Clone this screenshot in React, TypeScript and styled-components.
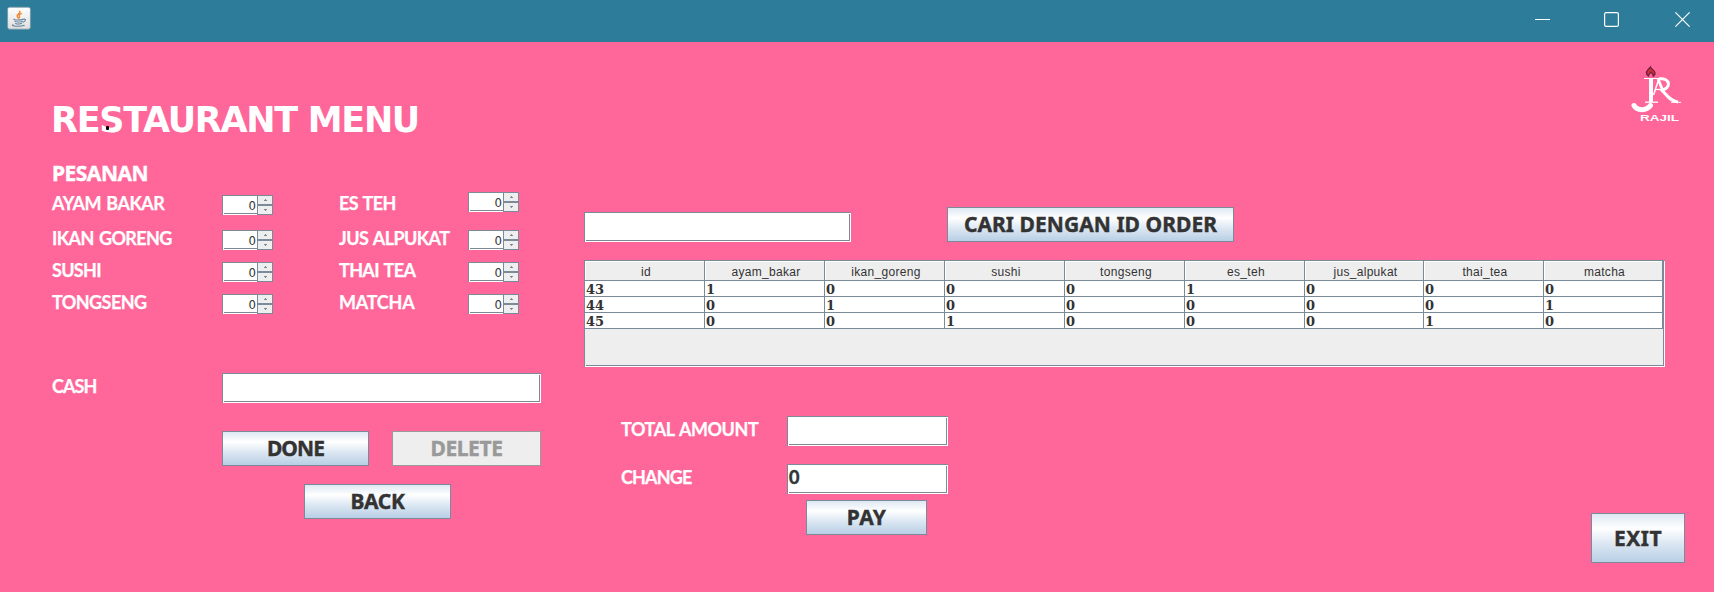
import React from "react";
import styled, { createGlobalStyle } from "styled-components";

const GRAY = "#7a8a99";

const Global = createGlobalStyle`
  * { box-sizing: border-box; }
  body { margin: 0; background: #ff6699; }
`;

const Window = styled.div`
  width: 1714px;
  height: 592px;
  display: flex;
  flex-direction: column;
  background: #ff6699;
  overflow: hidden;
`;

const TitleBar = styled.header`
  height: 42px;
  flex: none;
  display: flex;
  justify-content: space-between;
  background: #2d7d9a;
`;

const AppIcon = styled.svg`
  width: 24px;
  height: 24px;
  margin: 6px 0 0 7px;
`;

const WindowButtons = styled.div`
  display: flex;
  gap: 54px;
  padding: 12px 24px 0 0;
`;

const WindowGlyph = styled.svg`
  width: 15px;
  height: 15px;
  fill: none;
  stroke: #fff;
  &:last-child { margin-left: 2px; }
`;

const Client = styled.main`
  flex: 1;
  display: flex;
`;

const OrderPanel = styled.section`
  width: 584px;
  flex: none;
  padding: 42px 0 0 52px;
`;

const Title = styled.h1`
  position: relative;
  margin: 0;
  height: 72px;
  font: 700 35px/73px "DejaVu Sans", sans-serif;
  letter-spacing: -1.3px;
  text-indent: -1px;
  color: #fff;
  white-space: nowrap;
`;

const Dot = styled.i`
  position: absolute;
  left: 54px;
  top: 42px;
  width: 3px;
  height: 4px;
  border-radius: 1px;
  background: #000;
`;

const Subtitle = styled.h2`
  margin: 0;
  height: 39px;
  font: 700 21px/34px "Noto Sans", sans-serif;
  letter-spacing: -0.5px;
  -webkit-text-stroke: 0.4px currentColor;
  color: #fff;
`;

const OrderGrid = styled.div`
  display: grid;
  grid-template-columns: 170px 117px 129px 51px;
  grid-template-rows: 35px 32px 32px 32px;
`;

const Label = styled.label<{ $spacing: number }>`
  font: 700 18px/17px Lato, sans-serif;
  letter-spacing: ${(p) => p.$spacing}px;
  word-spacing: 1.5px;
  -webkit-text-stroke: 0.25px currentColor;
  color: #fff;
  white-space: nowrap;
`;

const SpinnerBox = styled.div<{ $raise?: boolean }>`
  display: flex;
  width: 51px;
  height: 20px;
  margin-top: ${(p) => (p.$raise ? -3 : 0)}px;
`;

const SpinnerValue = styled.div`
  width: 35px;
  height: 20px;
  padding-right: 1px;
  border-left: 1px solid ${GRAY};
  border-top: 1px solid ${GRAY};
  background: linear-gradient(${GRAY}, ${GRAY}) 1px 17px / 34px 1px no-repeat #fff;
  font: 13px/19px "DejaVu Sans Condensed", "DejaVu Sans", sans-serif;
  font-stretch: condensed;
  text-align: right;
  color: #333;
`;

const SpinnerButtons = styled.div`
  display: flex;
  flex-direction: column;
  width: 16px;
`;

const SpinnerArrow = styled.div`
  height: 10px;
  display: flex;
  align-items: center;
  justify-content: center;
  border: 1px solid ${GRAY};
  background: #eee;
`;

const Field = styled.div<{ $w: number }>`
  width: ${(p) => p.$w}px;
  height: 30px;
  flex: none;
  padding-left: 1px;
  border-left: 1px solid ${GRAY};
  border-top: 1px solid ${GRAY};
  background:
    linear-gradient(${GRAY}, ${GRAY}) 1px 27px / calc(100% - 2px) 1px no-repeat,
    linear-gradient(${GRAY}, ${GRAY}) calc(100% - 1px) 1px / 1px 27px no-repeat,
    #fff;
  font: 700 18px/25px Lato, sans-serif;
  -webkit-text-stroke: 0.5px currentColor;
  color: #333;
`;

const Button = styled.button<{ $w: number; $h?: number; $spacing?: number }>`
  width: ${(p) => p.$w}px;
  height: ${(p) => p.$h ?? 35}px;
  flex: none;
  padding: ${(p) => (p.$h ? "0" : "0 0 2px")};
  border: 1px solid ${GRAY};
  background: linear-gradient(#dde8f3, #fff 30%, #dde8f3 60%, #b8cfe5);
  font: 700 21px/28px "Noto Sans", sans-serif;
  letter-spacing: ${(p) => p.$spacing ?? -0.4}px;
  -webkit-text-stroke: 0.4px currentColor;
  color: #333;
  white-space: nowrap;
  &:disabled {
    border-color: #999;
    background: #eee;
    color: #999;
  }
`;

const CashRow = styled.div`
  display: flex;
  height: 58px;
  margin-top: 47px;
  ${Label} { width: 170px; padding-top: 5px; }
`;

const ActionRow = styled.div`
  display: flex;
  gap: 23px;
  padding-left: 170px;
`;

const BackRow = styled.div`
  padding: 18px 0 0 252px;
`;

const DataPanel = styled.section`
  flex: 1;
  display: flex;
  flex-direction: column;
`;

const LogoRow = styled.div`
  display: flex;
  justify-content: flex-end;
  height: 165px;
  padding: 20px 31px 0 0;
`;

const SearchRow = styled.div`
  display: flex;
  align-items: flex-end;
  gap: 96px;
  height: 35px;
`;

const ScrollPane = styled.div`
  width: 1081px;
  height: 107px;
  margin-top: 18px;
  border-left: 1px solid ${GRAY};
  border-top: 1px solid ${GRAY};
  background:
    linear-gradient(#fff, #fff) 0 105px / 100% 1px no-repeat,
    linear-gradient(#fff, #fff) 1079px 0 / 1px 100% no-repeat,
    linear-gradient(${GRAY}, ${GRAY}) 1px 104px / 1078px 1px no-repeat,
    linear-gradient(${GRAY}, ${GRAY}) 1078px 0 / 1px 105px no-repeat,
    #eee;
`;

const TableRow = styled.div`
  display: grid;
  width: 1078px;
  grid-template-columns: repeat(6, 120px) 119px 120px 119px;
`;

const HeadCell = styled.div`
  height: 20px;
  padding-left: 3px;
  border: 1px solid ${GRAY};
  border-width: 0 1px 1px 0;
  box-shadow: inset 1px 1px #fff;
  background: #eee;
  font: 12px/22px "Liberation Sans", sans-serif;
  letter-spacing: 0.3px;
  text-align: center;
  color: #333;
`;

const Cell = styled.div`
  height: 16px;
  padding-left: 1px;
  border: 1px solid ${GRAY};
  border-width: 0 1px 1px 0;
  background: #fff;
  font: 700 13px/17px "DejaVu Serif", serif;
  color: #333;
`;

const PaymentArea = styled.div`
  flex: 1;
  display: flex;
  justify-content: space-between;
  padding: 49px 29px 0 37px;
`;

const PaymentForm = styled.div`
  width: 327px;
`;

const PaymentRow = styled.div`
  display: flex;
  height: 48px;
  ${Label} { width: 166px; padding-top: 5px; }
`;

const PayRow = styled.div`
  margin: -12px 0 0 185px;
`;

const ExitSlot = styled.div`
  padding-top: 97px;
`;

const JavaIcon = () => (
  <AppIcon viewBox="0 0 24 24">
    <defs>
      <linearGradient id="tile" x2="0" y2="1">
        <stop stopColor="#fff" />
        <stop offset="1" stopColor="#dedede" />
      </linearGradient>
    </defs>
    <rect x=".6" y="1.2" width="22.8" height="22" rx="2" fill="url(#tile)" stroke="#7795a3" strokeWidth=".8" />
    <g fill="none" strokeLinecap="round">
      <path d="M12.6 5.2c1.8 2-3.4 3-2.5 5 .3.8 1 1.2 1.3 2M14.3 7.6c-2.8 1.4-2.4 2-1.8 2.8.5.6 0 1.2-.5 1.7" stroke="#ee8a35" strokeWidth="1.4" />
      <path d="M7 13.2c-1 1 7.500 1 9 0M8 15.400c1.500.9 6.300.8 7.400 0M8.600 17.400c1.500.8 5 .8 6 0M6 18.800c-2.800 1.500 7.500 2.100 11.200.4M16.300 13.300c3-1 2.800 2-.3 2.900" stroke="#5f819c" strokeWidth="1.100" />
    </g>
  </AppIcon>
);

const LogoSvg = styled.svg`
  width: 56px;
  height: 62px;
`;

const Logo = () => (
  <LogoSvg viewBox="0 0 56 62">
    <path d="M21.500 14c-4.500-3-.5-6.500 2-9 .2 2 4.500 3.500 4.600 6.300 0 1.500-.8 2.400-1.800 2.900 0-2-1-3-2.200-4-1 1.200-2.600 2.200-2.600 3.800z" fill="#c8313e" stroke="#702039" strokeWidth="1.300" />
    <g fill="none" stroke="#fff">
      <path d="M17 16.500H34" strokeWidth="1" />
      <path d="M24 16.500V40" strokeWidth="4" />
      <path d="M18 40.200h13" strokeWidth="1.300" />
      <path d="M26.500 33l5-15" strokeWidth="1.500" />
      <path d="M28 27.500h8" strokeWidth="1.200" />
      <path d="M31 17l5 12" strokeWidth="2.800" />
      <path d="M32 16.800c12-1.200 12 10 3 11" strokeWidth="3" />
      <path d="M34 27.500c5 4 8 11.500 17 12.500" strokeWidth="3.200" />
      <path d="M44 40.300h10" strokeWidth="1" />
      <path d="M7 43.500c3 5.500 12.500 5.500 16.500 0" strokeWidth="5" strokeLinecap="round" />
    </g>
    <text x="13" y="58.500" fill="#fff" fontFamily="Liberation Sans" fontWeight="700" fontSize="8.300" textLength="39" lengthAdjust="spacingAndGlyphs">RAJIL</text>
  </LogoSvg>
);

const Spinner = ({ raise }: { raise?: boolean }) => (
  <SpinnerBox $raise={raise}>
    <SpinnerValue>0</SpinnerValue>
    <SpinnerButtons>
      <SpinnerArrow>
        <svg width="3" height="2" shapeRendering="crispEdges"><path d="M1 0h1v1h1v1H0V1h1z" fill={GRAY} /></svg>
      </SpinnerArrow>
      <SpinnerArrow>
        <svg width="3" height="2" shapeRendering="crispEdges"><path d="M0 0h3v1H2v1H1V1H0z" fill={GRAY} /></svg>
      </SpinnerArrow>
    </SpinnerButtons>
  </SpinnerBox>
);

type Item = { name: string; spacing: number };

const menu: [Item, Item][] = [
  [{ name: "AYAM BAKAR", spacing: -0.5 }, { name: "ES TEH", spacing: -0.65 }],
  [{ name: "IKAN GORENG", spacing: -0.6 }, { name: "JUS ALPUKAT", spacing: -0.6 }],
  [{ name: "SUSHI", spacing: -0.7 }, { name: "THAI TEA", spacing: -0.65 }],
  [{ name: "TONGSENG", spacing: -0.56 }, { name: "MATCHA", spacing: -0.25 }],
];

const columns = ["id", "ayam_bakar", "ikan_goreng", "sushi", "tongseng", "es_teh", "jus_alpukat", "thai_tea", "matcha"];
const orders = [
  [43, 1, 0, 0, 0, 1, 0, 0, 0],
  [44, 0, 1, 0, 0, 0, 0, 0, 1],
  [45, 0, 0, 1, 0, 0, 0, 1, 0],
];

export default function App() {
  return (
    <>
      <Global />
      <Window>
        <TitleBar>
          <JavaIcon />
          <WindowButtons>
            <WindowGlyph><path d="M0 7.500h15" /></WindowGlyph>
            <WindowGlyph><rect x=".6" y=".6" width="13.800" height="13.800" rx="1.500" strokeWidth="1.200" /></WindowGlyph>
            <WindowGlyph><path d="M.4.400l14.200 14.200M14.600.400L.4 14.600" strokeWidth="1.200" /></WindowGlyph>
          </WindowButtons>
        </TitleBar>
        <Client>
          <OrderPanel>
            <Title>RESTAURANT MENU<Dot /></Title>
            <Subtitle>PESANAN</Subtitle>
            <OrderGrid>
              {menu.map(([left, right], i) => (
                <React.Fragment key={left.name}>
                  <Label $spacing={left.spacing}>{left.name}</Label>
                  <Spinner />
                  <Label $spacing={right.spacing}>{right.name}</Label>
                  <Spinner raise={i === 0} />
                </React.Fragment>
              ))}
            </OrderGrid>
            <CashRow>
              <Label $spacing={-0.9}>CASH</Label>
              <Field $w={319} />
            </CashRow>
            <ActionRow>
              <Button $w={147} $spacing={-0.9}>DONE</Button>
              <Button $w={149} disabled>DELETE</Button>
            </ActionRow>
            <BackRow><Button $w={147}>BACK</Button></BackRow>
          </OrderPanel>
          <DataPanel>
            <LogoRow><Logo /></LogoRow>
            <SearchRow>
              <Field $w={267} />
              <Button $w={287} $spacing={0.05}>CARI DENGAN ID ORDER</Button>
            </SearchRow>
            <ScrollPane>
              <TableRow>{columns.map((c) => <HeadCell key={c}>{c}</HeadCell>)}</TableRow>
              {orders.map((row) => (
                <TableRow key={row[0]}>{row.map((v, i) => <Cell key={i}>{v}</Cell>)}</TableRow>
              ))}
            </ScrollPane>
            <PaymentArea>
              <PaymentForm>
                <PaymentRow><Label $spacing={-0.45}>TOTAL AMOUNT</Label><Field $w={161} /></PaymentRow>
                <PaymentRow><Label $spacing={-0.85}>CHANGE</Label><Field $w={161}>0</Field></PaymentRow>
                <PayRow><Button $w={121} $spacing={0.3}>PAY</Button></PayRow>
              </PaymentForm>
              <ExitSlot><Button $w={94} $h={50} $spacing={0.5}>EXIT</Button></ExitSlot>
            </PaymentArea>
          </DataPanel>
        </Client>
      </Window>
    </>
  );
}
